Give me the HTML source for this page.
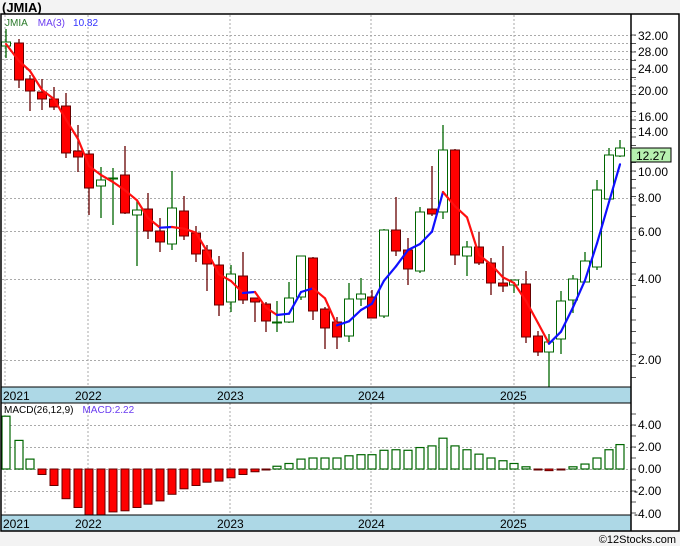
<!DOCTYPE html>
<html><head><meta charset="utf-8"><style>
html,body{margin:0;padding:0;background:#f3f3f3;width:680px;height:546px;overflow:hidden}
svg{display:block;font-family:"Liberation Sans",sans-serif}
</style></head><body>
<svg id="s" width="680" height="546" xmlns="http://www.w3.org/2000/svg">
<rect x="0" y="0" width="680" height="546" fill="#f3f3f3"/>
<rect x="1" y="14" width="678" height="517" fill="#fff"/>
<g id="grid"></g>
<g id="cand"></g>
<g id="macd"></g>
<g id="axis"></g>
<!-- date bars -->
<rect x="1" y="387" width="630" height="16" fill="#add8e6" stroke="#000"/>
<rect x="1" y="515" width="630" height="16" fill="#add8e6" stroke="#000"/>
<g font-size="12" fill="#000">
<text x="3" y="400">2021</text><text x="75" y="400">2022</text><text x="217" y="400">2023</text><text x="358" y="400">2024</text><text x="500" y="400">2025</text>
<text x="3" y="528">2021</text><text x="75" y="528">2022</text><text x="217" y="528">2023</text><text x="358" y="528">2024</text><text x="500" y="528">2025</text>
</g>
<rect x="1" y="14" width="678" height="517" fill="none" stroke="#000" stroke-width="1.5"/>
<line x1="631" y1="14" x2="631" y2="531" stroke="#000" stroke-width="1.5"/>
<text x="2" y="12" font-size="13" font-weight="bold" fill="#000">(JMIA)</text>
<text x="5" y="26" font-size="10"><tspan fill="#2a7a2a">JMIA</tspan><tspan fill="#6a3cf0" dx="10">MA(3)</tspan><tspan fill="#3333ff" dx="8">10.82</tspan></text>
<text x="4" y="413" font-size="10"><tspan fill="#000">MACD(26,12,9)</tspan><tspan fill="#6a3cf0" dx="9">MACD:2.22</tspan></text>
<g font-size="12" fill="#000">
<text x="638" y="40">32.00</text><text x="638" y="56">28.00</text><text x="638" y="73">24.00</text><text x="638" y="95">20.00</text><text x="638" y="121">16.00</text><text x="638" y="136">14.00</text><text x="638" y="176">10.00</text><text x="638" y="202">8.00</text><text x="638" y="236">6.00</text><text x="638" y="283">4.00</text><text x="638" y="364">2.00</text>
<text x="638" y="429">4.00</text><text x="638" y="451">2.00</text><text x="638" y="473">0.00</text><text x="634" y="495">-2.00</text><text x="634" y="518">-4.00</text>
</g>
<rect x="631" y="148" width="40" height="14" fill="#b7f0b0" stroke="#000"/>
<text x="636" y="160" font-size="12" fill="#000">12.27</text>
<text x="676" y="543" font-size="11" fill="#000" text-anchor="end">©12Stocks.com</text>
</svg>
<script>
var NS="http://www.w3.org/2000/svg";
function el(p,t,a){var e=document.createElementNS(NS,t);for(var k in a)e.setAttribute(k,a[k]);document.getElementById(p).appendChild(e);return e;}
function py(p){return 360-81.25*Math.log2(p/2);}
// grid
var xs=[5,88,230,371,514];
xs.forEach(function(x){el("grid","line",{x1:x,y1:15,x2:x,y2:387,stroke:"#aaa","stroke-dasharray":"2,2"});el("grid","line",{x1:x,y1:403,x2:x,y2:515,stroke:"#aaa","stroke-dasharray":"2,2"});});
[2,4,6,8,10,12,14,16,18,20,22,24,26,28,30,32].forEach(function(v){var y=Math.round(py(v))+.5;el("grid","line",{x1:2,y1:y,x2:637,y2:y,stroke:"#aaa","stroke-dasharray":"2,2"});});
[425,447,469,491].forEach(function(y){el("grid","line",{x1:2,y1:y+.5,x2:637,y2:y+.5,stroke:"#aaa","stroke-dasharray":"2,2"});});
for(var y=35;y<386;y+=0){el("axis","line",{x1:631,y1:y,x2:636,y2:y,stroke:"#555"});y+= (y<200?8.5:11.5);}
for(var y=414;y<515;y+=11){el("axis","line",{x1:631,y1:y,x2:636,y2:y,stroke:"#555"});}
// candles: x, bodyTop, bodyBot, high, low, green?
var C=[[6,42,46,29,58,1],[19,43,80,39,88,0],[30,79,91,75,111,0],[42,92,99,79,110,0],[54,99,107,87,110,0],[66,106,153,93,158,0],[78,151,157,125,172,0],[89,154,188,150,215,0],[101,180,186,167,218,1],[113,178,178,168,225,1],[125,175,213,146,214,0],[137,210,215,201,266,1],[148,209,231,193,239,0],[160,231,242,218,252,0],[172,208,244,171,250,1],[184,211,236,196,240,0],[196,233,254,226,262,0],[207,250,264,245,291,0],[219,265,305,256,316,0],[231,274,302,265,312,1],[243,276,300,252,304,0],[255,298,302,298,322,0],[266,304,321,302,332,0],[277,322,322,301,332,1],[289,298,322,282,323,1],[301,256,297,256,300,1],[313,258,311,257,320,0],[325,309,328,307,349,0],[337,322,337,317,349,0],[349,299,336,283,342,1],[361,294,299,278,306,1],[372,297,318,290,318,0],[384,230,316,229,318,1],[396,230,251,197,256,0],[408,250,269,238,285,0],[420,212,271,207,273,1],[432,209,214,166,216,0],[443,150,212,125,219,1],[455,150,255,149,265,0],[467,247,256,241,276,1],[479,247,263,232,265,0],[491,263,283,258,295,0],[503,283,286,246,292,0],[514,280,285,280,293,1],[526,284,337,271,343,0],[538,336,352,331,356,0],[549,342,352,334,387,1],[561,301,339,291,354,1],[573,279,300,275,313,1],[585,261,282,252,282,1],[597,190,267,180,270,1],[609,155,199,148,199,1],[620,148,156,140,157,1]];
C.forEach(function(c){var x=c[0],g=c[5];var wc=g?"#006600":"#660000";
el("cand","line",{x1:x,y1:c[3],x2:x,y2:c[4],stroke:wc,"stroke-width":1.3});
var h=Math.max(c[2]-c[1],1);
el("cand","rect",{x:x-4.5,y:c[1],width:9,height:h,fill:g?"#fff":"#ff0000",stroke:wc,"stroke-width":1});});
// MA3
var cl=C.map(function(c){return c[5]?c[1]:c[2];});
var ma=[];for(var i=0;i<C.length;i++){var s=0,n=0;for(var j=Math.max(0,i-2);j<=i;j++){s+=cl[j];n++;}ma.push(s/n);}
ma[0]=44;
for(var i=1;i<C.length;i++){var up=ma[i]<ma[i-1];el("cand","line",{x1:C[i-1][0],y1:ma[i-1],x2:C[i][0],y2:ma[i],stroke:up?"#1010ff":"#ff1010","stroke-width":2.2,"stroke-linecap":"round"});}
// MACD
var M=[4.8,2.6,0.9,-0.5,-1.5,-2.7,-3.5,-4.3,-4.5,-3.9,-3.8,-3.5,-3.2,-2.9,-2.3,-1.8,-1.5,-1.2,-1.1,-0.8,-0.5,-0.25,-0.05,0.25,0.5,0.9,1.0,1.0,1.0,1.2,1.3,1.3,1.7,1.75,1.7,1.95,2.1,2.8,2.1,1.75,1.35,1.0,0.75,0.5,0.2,-0.05,-0.15,-0.05,0.2,0.45,1.0,1.75,2.22];
M.forEach(function(v,i){var x=C[i][0];var z=469,y=z-v*11;var top=Math.min(y,z),h=Math.max(Math.abs(y-z),1);
if(v>=0)el("macd","rect",{x:x-4,y:top,width:8,height:h,fill:"#fff",stroke:"#006600","stroke-width":1.2});
else el("macd","rect",{x:x-4,y:top,width:8,height:h,fill:"#ff0000",stroke:"#660000","stroke-width":1});});
</script>
</body></html>
